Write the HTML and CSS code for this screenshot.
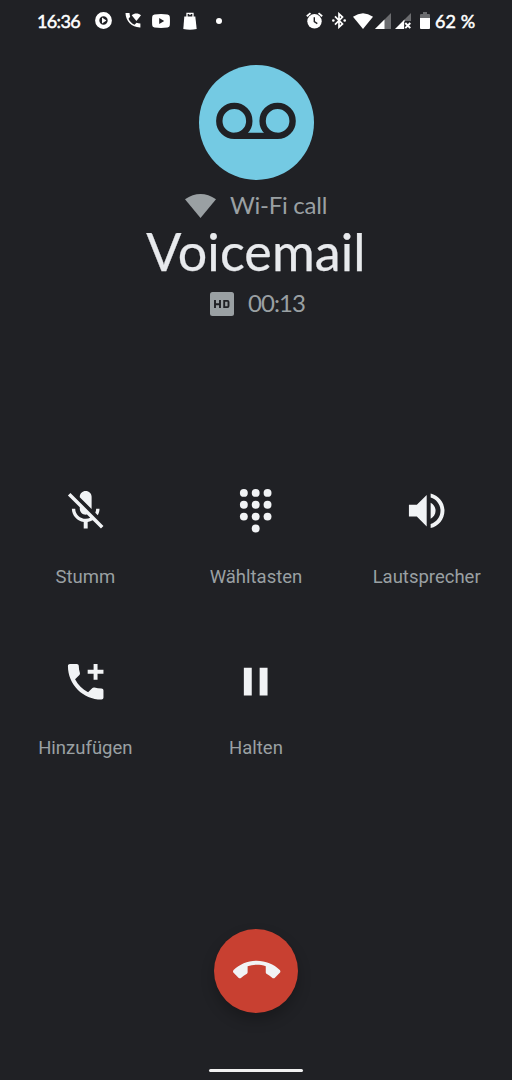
FILE: index.html
```html
<!DOCTYPE html>
<html lang="de">
<head>
<meta charset="utf-8">
<title>Voicemail</title>
<link rel="stylesheet" href="styles.css">
</head>
<body>
<div class="screen">
  <header class="status">
    <div class="status-left">
      <span class="clock">16:36</span>
      <svg class="i-play" width="17" height="17" viewBox="0 0 17 17"><circle cx="8.5" cy="8.5" r="6.3" fill="none" stroke="#fff" stroke-width="4.2"/><path d="M7 5.600v5.800l4.400-2.900z" fill="#fff"/></svg>
      <svg class="i-call" width="17" height="17" viewBox="0 0 17 17" fill="#fff"><path d="M.5 1h4c.1 1.500.3 2.600.7 3.700L3.500 6.800c1.300 2.700 3.300 4.700 6 6l2.100-2c1.200.3 2.400.5 3.800.6v4C7.200 15.700.5 9 .5 1z"/><path d="M6.700 3.200c2.700-2.400 6.600-2.400 9.300 0L11.400 9z"/></svg>
      <svg class="i-tube" width="18" height="14" viewBox="0 0 18 14"><path fill="#fff" fill-rule="evenodd" d="M2.500.5Q9-.3 15.500.5q2.200.2 2.300 2.300.3 4.200 0 8.400-.1 2.100-2.300 2.300-6.500.8-13 0Q.3 13.300.2 11.200q-.3-4.200 0-8.400Q.3.700 2.500.5zM7.200 4v6l5-3z"/></svg>
      <svg class="i-bag" width="14" height="18" viewBox="0 0 14 18"><path fill="#fff" d="M1.300 4.500h11L13.700 17q-6.700 1.500-13.400 0z"/><path d="M4 5V1.300h6V5M7 1.300V3" fill="none" stroke="#fff" stroke-width="1.300"/></svg>
      <span class="dot"></span>
    </div>
    <div class="status-right">
      <svg class="i-alarm" width="17" height="17" viewBox="0 0 17 17"><circle cx="8.500" cy="9.300" r="7.200" fill="#fff"/><path d="M.8 4.200 4.500 1.100M16.200 4.200l-3.700-3.100" stroke="#fff" stroke-width="1.800"/><path d="M8.300 5.200v4.500l3 1.900" fill="none" stroke="#202125" stroke-width="1.400"/></svg>
      <svg class="i-bt" width="14" height="17" viewBox="0 0 14 17"><path d="M3 4.300l7.500 7.700L7 15.200V1.800L10.500 5 3 12.700" fill="none" stroke="#fff" stroke-width="1.700"/><circle cx="1.300" cy="8.500" r="1.300" fill="#fff"/><circle cx="12.700" cy="8.500" r="1.300" fill="#fff"/></svg>
      <svg class="i-wifi" width="20" height="16" viewBox="0 0 20 16"><path fill="#fff" d="M0 3.700Q10-3.300 20 3.700L10 16z"/></svg>
      <svg class="i-sig" width="16" height="16" viewBox="0 0 16 16"><path fill="#6b6c6f" d="M16 0v16H0z"/><path fill="#fff" d="M9.500 6.500V16H0z"/></svg>
      <svg class="i-sig2" width="17" height="16" viewBox="0 0 17 16"><path fill="#6b6c6f" d="M16 0v8H8z"/><path fill="#fff" d="M9.500 6.500V16H0z"/><path fill="#202125" d="M9.300 9h8v7h-8z"/><path d="M10.300 10l5 5.200m0-5.200l-5 5.200" stroke="#fff" stroke-width="1.900"/></svg>
      <svg class="i-bat" width="10" height="17" viewBox="0 0 10 17"><path fill="#6b6c6f" d="M3 0h4v2h2q1 0 1 1v4H0V3q0-1 1-1h2z"/><path fill="#fff" d="M0 6h10v10q0 1-1 1H1q-1 0-1-1z"/></svg>
      <span class="percent">62 %</span>
    </div>
  </header>

  <section class="caller">
    <div class="avatar">
      <svg width="115" height="115" viewBox="199 65 115 115" fill="none" stroke="#202125" stroke-width="6.400"><circle cx="234.300" cy="120.900" r="15"/><circle cx="277.600" cy="120.900" r="15"/><path d="M234.300 135.900h43.300"/></svg>
    </div>
    <div class="meta network">
      <svg width="31" height="24" viewBox="0 0 31 24"><path fill="#9aa0a3" d="M0 5.300Q15.500-5.300 31 5.300L15.500 24z"/></svg>
      <span>Wi-Fi call</span>
    </div>
    <h1 class="name">Voicemail</h1>
    <div class="meta timer">
      <svg width="24" height="24" viewBox="0 0 24 24"><rect width="24" height="24" rx="2.500" fill="#9aa0a3"/><path d="M5 8v8M10 8v8M5 12.300h5M14.200 8.900h3.300q1 0 1 1v4.200q0 1-1 1h-3.300z" fill="none" stroke="#202125" stroke-width="1.900"/></svg>
      <span>00:13</span>
    </div>
  </section>

  <main class="actions">
    <div class="action">
      <svg class="icon" viewBox="0 0 24 24"><path d="M19 11h-1.700c0 .74-.16 1.430-.43 2.050l1.230 1.230c.56-.98.9-2.090.9-3.280zm-4.020.17c0-.06.02-.11.02-.17V5c0-1.660-1.340-3-3-3S9 3.340 9 5v.18l5.980 5.990zM4.270 3L3 4.270l6.010 6.010V11c0 1.660 1.330 3 2.990 3 .22 0 .44-.03.65-.08l1.660 1.660c-.71.33-1.500.52-2.310.52-2.760 0-5.300-2.100-5.300-5.100H5c0 3.410 2.720 6.230 6 6.720V21h2v-3.280c.91-.13 1.770-.45 2.540-.9L19.730 21 21 19.730 4.270 3z"/></svg>
      <span class="label">Stumm</span>
    </div>
    <div class="action">
      <svg class="icon" viewBox="0 0 24 24"><circle cx="6" cy="3" r="2"/><circle cx="12" cy="3" r="2"/><circle cx="18" cy="3" r="2"/><circle cx="6" cy="9" r="2"/><circle cx="12" cy="9" r="2"/><circle cx="18" cy="9" r="2"/><circle cx="6" cy="15" r="2"/><circle cx="12" cy="15" r="2"/><circle cx="18" cy="15" r="2"/><circle cx="12" cy="21" r="2"/></svg>
      <span class="label">Wähltasten</span>
    </div>
    <div class="action">
      <svg class="icon" viewBox="0 0 24 24"><path d="M3 9v6h4l5 5V4L7 9H3zm13.500 3c0-1.770-1.020-3.290-2.500-4.030v8.050c1.480-.73 2.500-2.250 2.500-4.020zM14 3.230v2.060c2.890.86 5 3.540 5 6.710s-2.110 5.850-5 6.710v2.060c4.010-.91 7-4.490 7-8.770s-2.990-7.860-7-8.770z"/></svg>
      <span class="label">Lautsprecher</span>
    </div>
    <div class="action">
      <svg class="icon" viewBox="0 0 24 24"><path d="M20 15.500c-1.250 0-2.450-.2-3.570-.57-.35-.11-.74-.03-1.020.24l-2.200 2.200c-2.830-1.440-5.150-3.750-6.590-6.590l2.200-2.210c.28-.26.36-.65.25-1C8.700 6.450 8.500 5.250 8.500 4c0-.55-.45-1-1-1H4c-.55 0-1 .45-1 1 0 9.390 7.610 17 17 17 .55 0 1-.45 1-1v-3.500c0-.55-.45-1-1-1zM16 3h2v3h3v2h-3v3h-2V8h-3V6h3z"/></svg>
      <span class="label">Hinzufügen</span>
    </div>
    <div class="action">
      <svg class="icon" viewBox="0 0 24 24"><path d="M6 5h4v14H6zM14 5h4v14h-4z"/></svg>
      <span class="label">Halten</span>
    </div>
  </main>

  <footer class="footer">
    <button class="hangup" aria-label="Auflegen">
      <svg class="icon" viewBox="0 0 24 24"><path d="M12 9c-1.600 0-3.150.25-4.600.72v3.100c0 .39-.23.74-.56.9-.98.49-1.870 1.120-2.660 1.850-.18.18-.43.28-.7.28-.28 0-.53-.11-.71-.29L.29 13.080c-.18-.17-.29-.42-.29-.7 0-.28.11-.53.29-.71C3.340 8.780 7.460 7 12 7s8.660 1.780 11.710 4.670c.18.18.29.43.29.71 0 .28-.11.53-.29.71l-2.480 2.480c-.18.18-.43.29-.71.29-.27 0-.52-.11-.7-.28-.79-.74-1.690-1.360-2.670-1.850-.33-.16-.56-.5-.56-.9v-3.100C15.150 9.250 13.600 9 12 9z"/></svg>
    </button>
    <div class="handle"></div>
  </footer>
</div>
</body>
</html>
```
FILE: styles.css
```css
* { box-sizing: border-box; }
body { margin: 0; background: #202125; }
svg { display: block; flex: none; }
.screen {
  width: 512px; height: 1080px; overflow: hidden;
  display: flex; flex-direction: column;
  background: #202125; color: #e8eaed;
  font-family: Lato, sans-serif;
}
.status {
  height: 41px; flex: none; padding: 0 37px;
  display: flex; justify-content: space-between; align-items: center;
  color: #fff; font-size: 18px; font-weight: 400; white-space: nowrap;
  -webkit-text-stroke: .5px #fff;
}
.status-left, .status-right { display: flex; align-items: center; }
.clock { width: 43px; letter-spacing: -.65px; }
.i-play { margin-left: 15px; }
.i-call { margin-left: 13px; }
.i-tube { margin-left: 10px; }
.i-bag { margin-left: 13px; }
.dot { width: 6px; height: 6px; margin-left: 19px; border-radius: 50%; background: #fff; }
.i-bt { margin-left: 9px; }
.i-wifi { margin-left: 7px; }
.i-sig { margin-left: 2px; }
.i-sig2 { margin-left: 4px; }
.i-bat { margin-left: 8px; }
.percent { width: 40px; margin-left: 5px; letter-spacing: .1px; }

.caller { height: 429px; flex: none; padding-top: 24px; display: flex; flex-direction: column; align-items: center; }
.avatar { width: 115px; height: 115px; border-radius: 50%; background: #74cae3; }
.meta { display: flex; align-items: center; justify-content: center; color: #9aa0a3; font-size: 24px; line-height: 28px; white-space: nowrap; }
.network { margin-top: 12px; gap: 14px; letter-spacing: -.25px; }
.network span { margin-top: -1px; }
.name { margin: 2px 0 0; font-size: 52px; font-weight: 400; line-height: 60px; letter-spacing: .1px; -webkit-text-stroke: .25px #e8eaed; }
.timer { margin-top: 9px; gap: 14px; letter-spacing: -.9px; padding-left: 3px; }
.timer span { margin-top: -1px; }

.actions { display: grid; grid-template-columns: repeat(3, 1fr); grid-auto-rows: 171px; padding-top: 17px; height: 442px; flex: none; }
.action { display: flex; flex-direction: column; align-items: center; }
.icon { width: 47.400px; height: 47.400px; fill: #f1f3f5; overflow: visible; }
.label { margin-top: 30.600px; font-family: Roboto, sans-serif; font-size: 18.500px; line-height: 24px; color: #9aa0a3; }

.footer { flex: 1; padding-top: 16.700px; display: flex; flex-direction: column; align-items: center; }
.hangup {
  width: 84px; height: 84px; padding: 0; border: 0; border-radius: 50%;
  display: flex; align-items: center; justify-content: center;
  background: #c84031; box-shadow: 0 7px 14px rgba(0, 0, 0, .24);
}
.hangup .icon { margin-left: 1px; }
.handle { width: 94px; height: 3px; margin-top: 56.300px; border-radius: 2px; background: #f1f1f1; }
```
